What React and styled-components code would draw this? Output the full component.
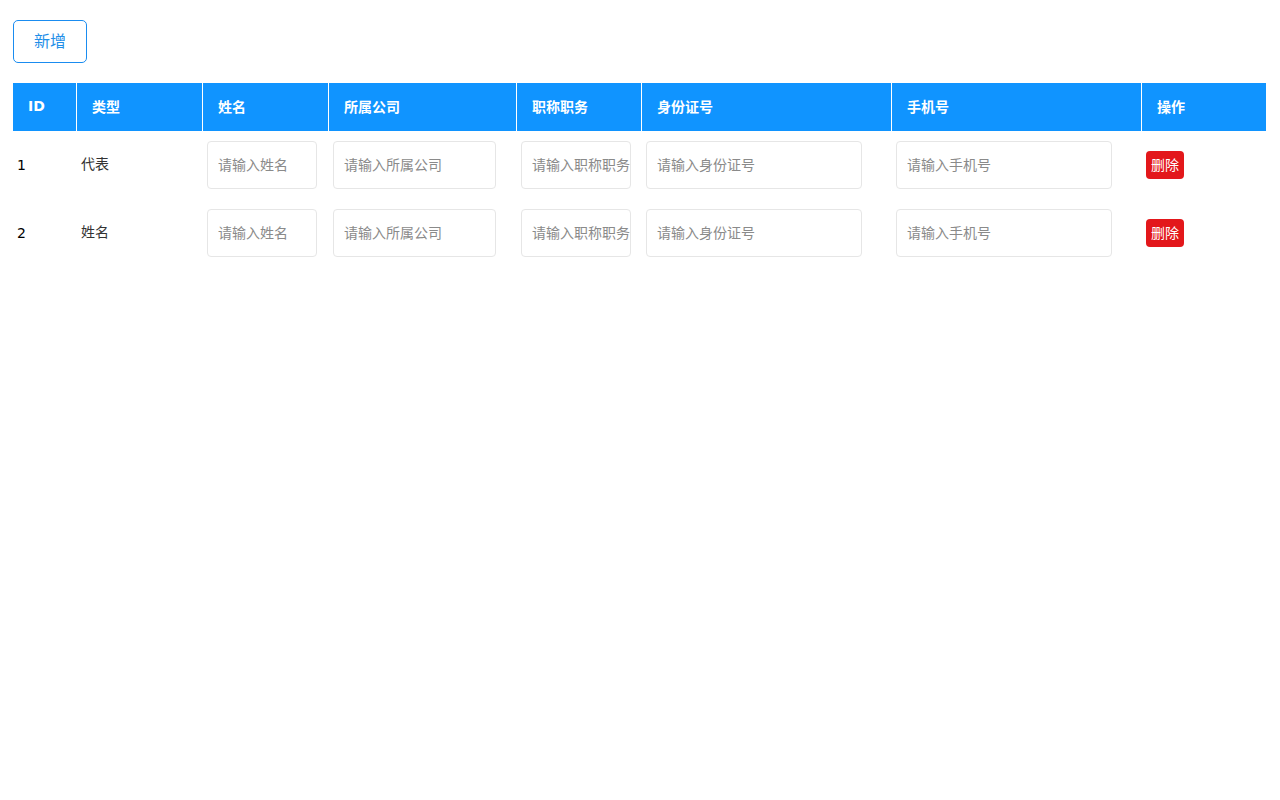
import React, { useState } from "react";
import styled, { createGlobalStyle } from "styled-components";

const GlobalStyle = createGlobalStyle`
  body {
    margin: 0;
    background: #fff;
    font-family: "DejaVu Sans", "Noto Sans CJK SC", sans-serif;
  }
`;

const Page = styled.div`
  padding: 20px 13px;
`;

const AddButton = styled.button`
  box-sizing: border-box;
  width: 74px;
  height: 43px;
  padding: 0 0 4px;
  border: 1px solid #1a8cf0;
  border-radius: 5px;
  background: #fff;
  color: #1f8fe8;
  font-size: 16px;
  font-family: "Noto Sans CJK SC", sans-serif;
  cursor: pointer;
  margin-bottom: 20px;
  display: block;
`;

const Table = styled.table`
  width: 1253px;
  border-collapse: separate;
  border-spacing: 0;
  table-layout: fixed;
`;

const Th = styled.th`
  background: #1094ff;
  color: #fff;
  height: 48px;
  box-sizing: border-box;
  padding: 0 15px 3px;
  text-align: left;
  font-size: 14px;
  font-weight: bold;
  border-right: 1px solid #fff;
  &:last-child {
    border-right: none;
  }
`;

const Td = styled.td`
  padding: 10px 4px ${(p) => (p.$lift ? "14px" : "10px")};
  font-size: 14px;
  color: ${(p) => (p.$dark ? "#000" : "#333")};
  vertical-align: middle;
`;

const Input = styled.input`
  box-sizing: border-box;
  width: ${(p) => p.$w}px;
  height: 48px;
  border: 1px solid #e6e6e6;
  border-radius: 4px;
  padding: 0 0 3px 10px;
  font-size: 14px;
  font-family: "Noto Sans CJK SC", sans-serif;
  color: #333;
  outline: none;
  &::placeholder {
    color: #8a8a8a;
  }
`;

const DeleteButton = styled.button`
  box-sizing: border-box;
  height: 28px;
  width: 38px;
  padding: 0 0 3px;
  border: none;
  border-radius: 4px;
  background: #e3171b;
  color: #fff;
  font-size: 14px;
  font-family: "Noto Sans CJK SC", sans-serif;
  cursor: pointer;
`;

const columns = [
  { title: "ID", width: 64 },
  { title: "类型", width: 126 },
  { title: "姓名", width: 126 },
  { title: "所属公司", width: 188 },
  { title: "职称职务", width: 125 },
  { title: "身份证号", width: 250 },
  { title: "手机号", width: 250 },
  { title: "操作", width: 124 },
];

const fields = [
  { key: "name", placeholder: "请输入姓名", w: 110 },
  { key: "company", placeholder: "请输入所属公司", w: 163 },
  { key: "title", placeholder: "请输入职称职务", w: 110 },
  { key: "idcard", placeholder: "请输入身份证号", w: 216 },
  { key: "phone", placeholder: "请输入手机号", w: 216 },
];

const App = () => {
  const [rows, setRows] = useState([
    { id: 1, type: "代表" },
    { id: 2, type: "姓名" },
  ]);

  const addRow = () =>
    setRows([...rows, { id: rows.length + 1, type: "姓名" }]);
  const removeRow = (id) => setRows(rows.filter((r) => r.id !== id));

  return (
    <Page>
      <GlobalStyle />
      <AddButton onClick={addRow}>新增</AddButton>
      <Table>
        <colgroup>
          {columns.map((c) => (
            <col key={c.title} style={{ width: c.width }} />
          ))}
        </colgroup>
        <thead>
          <tr>
            {columns.map((c) => (
              <Th key={c.title}>{c.title}</Th>
            ))}
          </tr>
        </thead>
        <tbody>
          {rows.map((r) => (
            <tr key={r.id}>
              <Td $dark>{r.id}</Td>
              <Td $lift>{r.type}</Td>
              {fields.map((f) => (
                <Td key={f.key}>
                  <Input $w={f.w} placeholder={f.placeholder} />
                </Td>
              ))}
              <Td>
                <DeleteButton onClick={() => removeRow(r.id)}>删除</DeleteButton>
              </Td>
            </tr>
          ))}
        </tbody>
      </Table>
    </Page>
  );
};

export default App;
